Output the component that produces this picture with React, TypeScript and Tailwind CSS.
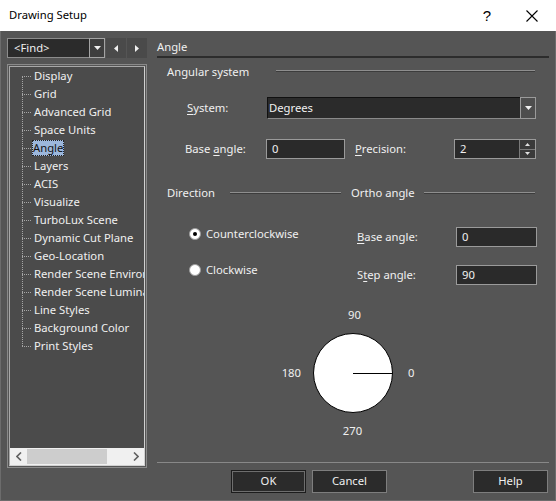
import React from 'react';

const treeItems = [
  'Display',
  'Grid',
  'Advanced Grid',
  'Space Units',
  'Angle',
  'Layers',
  'ACIS',
  'Visualize',
  'TurboLux Scene',
  'Dynamic Cut Plane',
  'Geo-Location',
  'Render Scene Environment',
  'Render Scene Luminaires',
  'Line Styles',
  'Background Color',
  'Print Styles',
];

function DownTri() {
  return (
    <svg width="7" height="4" viewBox="0 0 7 4">
      <path d="M0 0h7L3.5 4z" fill="#f0f0f0" />
    </svg>
  );
}

function Etched({ className = '' }: { className?: string }) {
  return <div className={`h-0 border-t border-b border-t-[#8e8e8e] border-b-[#3c3c3c] ${className}`} />;
}

function TextBox({ value, className = '' }: { value: string; className?: string }) {
  return (
    <div className={`h-[20px] bg-[#2a2a2a] border border-[#9a9a9a] flex items-center pl-[5px] ${className}`}>
      {value}
    </div>
  );
}

function Radio({ checked, label }: { checked?: boolean; label: string }) {
  return (
    <div className="h-[16px] flex items-center pl-[32px]">
      <span className="w-[12px] h-[12px] rounded-full bg-white border border-[#9c9c9c] flex items-center justify-center">
        {checked && <span className="w-[4px] h-[4px] rounded-full bg-black" />}
      </span>
      <span className="ml-[5px]">{label}</span>
    </div>
  );
}

function Button({ label, isDefault }: { label: string; isDefault?: boolean }) {
  return (
    <div
      className={`w-[75px] h-[23px] flex items-center justify-center bg-[#2b2b2b] border ${
        isDefault ? 'border-[#1c1c1c] shadow-[inset_0_0_0_1px_#6e6e6e]' : 'border-[#7e7e7e]'
      }`}
    >
      {label}
    </div>
  );
}

export default function App() {
  return (
    <div className="w-[556px] h-[501px] flex flex-col bg-[#555555] font-['Noto_Sans','Liberation_Sans',sans-serif] text-[11.25px] text-[#f0f0f0] overflow-hidden select-none">
      {/* title bar */}
      <div className="h-[31px] shrink-0 bg-white flex items-center pl-[9px] text-black">
        <span>Drawing Setup</span>
        <span className="ml-auto text-[15px] leading-none mr-[35px] font-['Liberation_Sans',sans-serif]">?</span>
        <svg width="12" height="12" viewBox="0 0 12 12" className="mr-[18px]">
          <path d="M0.5 0.5l11 11M11.5 0.5l-11 11" stroke="#000" strokeWidth="1.1" />
        </svg>
      </div>

      <div className="flex-1 flex border-x border-b border-[#6c6c6c] pt-[7px] pl-[6px]">
        {/* left column */}
        <div className="w-[140px] flex flex-col">
          <div className="h-[20px] flex">
            <div className="w-[98px] flex bg-[#2b2b2b] border border-[#8c8c8c]">
              <span className="flex-1 pl-[6px] flex items-center">&lt;Find&gt;</span>
              <span className="w-[16px] -my-[1px] -mr-[1px] border border-[#a4a4a4] bg-[#3e3e3e] flex items-center justify-center">
                <DownTri />
              </span>
            </div>
            <div className="ml-[1px] w-[20px] bg-[#4a4a4a] flex items-center justify-center">
              <svg width="4" height="7" viewBox="0 0 4 7">
                <path d="M4 0v7L0 3.5z" fill="#f0f0f0" />
              </svg>
            </div>
            <div className="ml-[1px] w-[20px] bg-[#4a4a4a] flex items-center justify-center">
              <svg width="4" height="7" viewBox="0 0 4 7">
                <path d="M0 0v7L4 3.5z" fill="#f0f0f0" />
              </svg>
            </div>
          </div>

          <div className="mt-[6px] h-[404px] border border-[#8a8a8a] p-[1px]">
            <div className="h-full flex flex-col border border-[#a8a8a8] border-r-[#d0d0d0] border-b-[#d0d0d0] bg-[#4b4b4b] overflow-hidden">
              <div className="flex-1 relative">
                <div className="absolute left-[12px] top-[9px] h-[270px] border-l border-dotted border-[#a6a6a6]" />
                {treeItems.map((t) => (
                  <div key={t} className="h-[18px] flex items-center whitespace-nowrap">
                    <span className="w-[12px] shrink-0" />
                    <span className="w-[9px] shrink-0 border-t border-dotted border-[#a6a6a6]" />
                    {t === 'Angle' ? (
                      <span className="ml-[1px] px-[1px] h-[16px] flex items-center bg-[#9cb7dc] text-[#111] outline outline-1 outline-dotted outline-[#222] -outline-offset-1">
                        {t}
                      </span>
                    ) : (
                      <span className="ml-[1px] px-[2px]">{t}</span>
                    )}
                  </div>
                ))}
              </div>
              <div className="h-[17px] shrink-0 bg-[#f0f0f0] flex items-center">
                <span className="w-[17px] flex items-center justify-center">
                  <svg width="6" height="9" viewBox="0 0 6 9">
                    <path d="M5 0.5L1 4.5l4 4" stroke="#606060" strokeWidth="1.6" fill="none" />
                  </svg>
                </span>
                <span className="w-[80px] h-[15px] bg-[#cdcdcd]" />
                <span className="flex-1" />
                <span className="w-[17px] flex items-center justify-center">
                  <svg width="6" height="9" viewBox="0 0 6 9">
                    <path d="M1 0.5l4 4-4 4" stroke="#606060" strokeWidth="1.6" fill="none" />
                  </svg>
                </span>
              </div>
            </div>
          </div>
        </div>

        {/* right column */}
        <div className="ml-[10px] w-[392px] flex flex-col">
          <div className="h-[18px] flex items-center border-b-2 border-[#2c2c2c] box-content">Angle</div>

          <div className="mt-[6px] h-[16px] flex items-center pl-[10px]">
            <span>Angular system</span>
            <Etched className="ml-auto w-[259px] mr-[14px] mb-[2px]" />
          </div>

          <div className="mt-[17px] h-[22px] flex items-center">
            <span className="ml-[30px] w-[80px]">
              <span className="underline underline-offset-2">S</span>ystem:
            </span>
            <div className="w-[269px] h-[22px] flex bg-[#2b2b2b] border border-[#111] border-b-[#8a8a8a] border-r-[#8a8a8a]">
              <span className="flex-1 flex items-center pl-[1px]">Degrees</span>
              <span className="w-[16px] -my-[1px] -mr-[1px] border border-[#9a9a9a] bg-[#4e4e4e] flex items-center justify-center">
                <DownTri />
              </span>
            </div>
          </div>

          <div className="mt-[20px] h-[20px] flex items-center">
            <span className="ml-[28px] w-[81px]">
              Base <span className="underline underline-offset-2">a</span>ngle:
            </span>
            <TextBox value="0" className="w-[79px]" />
            <span className="ml-[10px] w-[99px]">
              <span className="underline underline-offset-2">P</span>recision:
            </span>
            <div className="w-[82px] h-[20px] flex bg-[#2a2a2a] border border-[#9a9a9a]">
              <span className="flex-1 flex items-center pl-[5px]">2</span>
              <span className="w-[16px] flex flex-col border-l border-[#7a7a7a] bg-[#3a3a3a]">
                <span className="flex-1 flex items-center justify-center border-b border-[#7a7a7a]">
                  <svg width="5" height="3" viewBox="0 0 5 3">
                    <path d="M0 3h5L2.5 0z" fill="#e0e0e0" />
                  </svg>
                </span>
                <span className="flex-1 flex items-center justify-center">
                  <svg width="5" height="3" viewBox="0 0 5 3">
                    <path d="M0 0h5L2.5 3z" fill="#e0e0e0" />
                  </svg>
                </span>
              </span>
            </div>
          </div>

          <div className="mt-[26px] h-[16px] flex items-center">
            <div className="w-[184px] flex items-center pl-[10px]">
              <span>Direction</span>
              <Etched className="ml-auto w-[111px]" />
            </div>
            <div className="flex-1 flex items-center pl-[10px]">
              <span>Ortho angle</span>
              <Etched className="ml-auto w-[111px] mr-[14px]" />
            </div>
          </div>

          <div className="flex">
            <div className="w-[184px] flex flex-col">
              <div className="mt-[25px]">
                <Radio checked label="Counterclockwise" />
              </div>
              <div className="mt-[20px]">
                <Radio label="Clockwise" />
              </div>
            </div>
            <div className="flex-1 flex flex-col pl-[16px]">
              <div className="mt-[26px] flex items-center">
                <span className="w-[99px]">
                  <span className="underline underline-offset-2">B</span>ase angle:
                </span>
                <TextBox value="0" className="w-[81px]" />
              </div>
              <div className="mt-[18px] flex items-center">
                <span className="w-[99px]">
                  S<span className="underline underline-offset-2">t</span>ep angle:
                </span>
                <TextBox value="90" className="w-[81px]" />
              </div>
            </div>
          </div>

          {/* dial */}
          <div className="mt-[23px] flex flex-col items-center">
            <span className="h-[14px] leading-[14px] ml-[3px]">90</span>
            <div className="mt-[11px] flex items-center">
              <span className="w-[40px] pr-[12px] text-right">180</span>
              <svg width="80" height="80" viewBox="0 0 80 80">
                <circle cx="40" cy="40" r="39.5" fill="#fff" stroke="#000" strokeWidth="1" />
                <path d="M40 40.5h39.5" stroke="#000" strokeWidth="1" />
              </svg>
              <span className="w-[40px] pl-[15px]">0</span>
            </div>
            <span className="mt-[11px] h-[14px] leading-[14px] -ml-[1px]">270</span>
          </div>

          {/* footer */}
          <div className="mt-auto border-t border-[#888888]" />
          <div className="mt-[7px] mb-[7px] flex gap-[6px] pl-[74px] pr-[1px]">
            <Button label="OK" isDefault />
            <Button label="Cancel" />
            <span className="flex-1" />
            <Button label="Help" />
          </div>
        </div>
      </div>
    </div>
  );
}
